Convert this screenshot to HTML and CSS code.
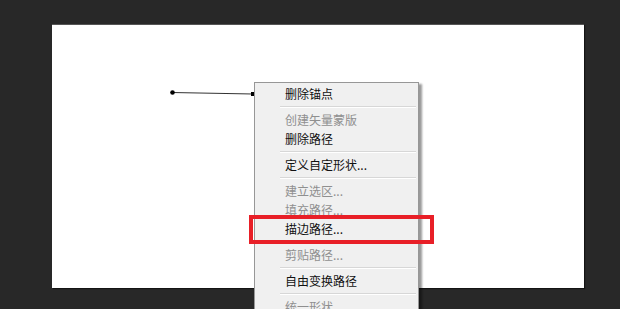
FILE: index.html
```html
<!DOCTYPE html>
<html lang="zh-CN">
<head>
  <meta charset="UTF-8">
  <title>路径右键菜单</title>
  <link rel="stylesheet" href="styles.css">
</head>
<body>
  <div class="canvas">
    <svg class="path" width="150" height="20" viewBox="0 0 150 20">
      <line x1="2" y1="3.5" x2="83" y2="5" stroke="#333" stroke-width="1.1" />
      <circle cx="2.5" cy="3.5" r="2.3" fill="#000" />
      <rect x="81" y="3" width="3" height="4" fill="#000" />
    </svg>
  </div>

  <ul class="menu">
    <li>删除锚点</li>
    <li class="sep"></li>
    <li class="off">创建矢量蒙版</li>
    <li>删除路径</li>
    <li class="sep"></li>
    <li>定义自定形状...</li>
    <li class="sep"></li>
    <li class="off">建立选区...</li>
    <li class="off">填充路径...</li>
    <li>描边路径...</li>
    <li class="sep"></li>
    <li class="off">剪贴路径...</li>
    <li class="sep"></li>
    <li>自由变换路径</li>
    <li class="sep"></li>
    <li class="off">统一形状</li>
  </ul>

  <div class="mark"></div>
</body>
</html>
```

FILE: styles.css
```css
* {
  box-sizing: border-box;
  margin: 0;
  padding: 0;
}
html, body {
  height: 100%;
  overflow: hidden;
}
body {
  background-color: #282828;
  font-family: "Microsoft YaHei", "Noto Sans CJK SC", sans-serif;
  padding: 24px 0 0 52px;
}
.canvas {
  position: relative;
  width: 532px;
  height: 264px;
  background-color: white;
  border-top: 1px solid #555;
  box-shadow: 1px 1px 1px rgba(0, 0, 0, 0.5);
}
.path {
  position: absolute;
  left: 118px;
  top: 64px;
}
.menu {
  position: absolute;
  left: 254px;
  top: 82px;
  width: 165px;
  list-style: none;
  background-color: #f0f0f0;
  border: 1px solid #979797;
  padding-top: 1px;
  box-shadow: 3px 2px 2px rgba(0, 0, 0, 0.4);
}
.menu li {
  height: 19px;
  line-height: 19px;
  font-size: 12px;
  color: #111;
  padding-left: 30px;
  white-space: nowrap;
}
.menu li.off {
  color: #8f8f8f;
}
.menu li.sep {
  height: 7px;
  margin: 0 2px 0 25px;
  padding: 0;
  position: relative;
}
.menu li.sep::after {
  content: "";
  position: absolute;
  left: 0;
  right: 0;
  top: 3px;
  border-top: 1px solid #d7d7d7;
  border-bottom: 1px solid #fff;
}
.mark {
  position: absolute;
  left: 249px;
  top: 215px;
  width: 185px;
  height: 29px;
  border: 4px solid #e81f27;
}
```
